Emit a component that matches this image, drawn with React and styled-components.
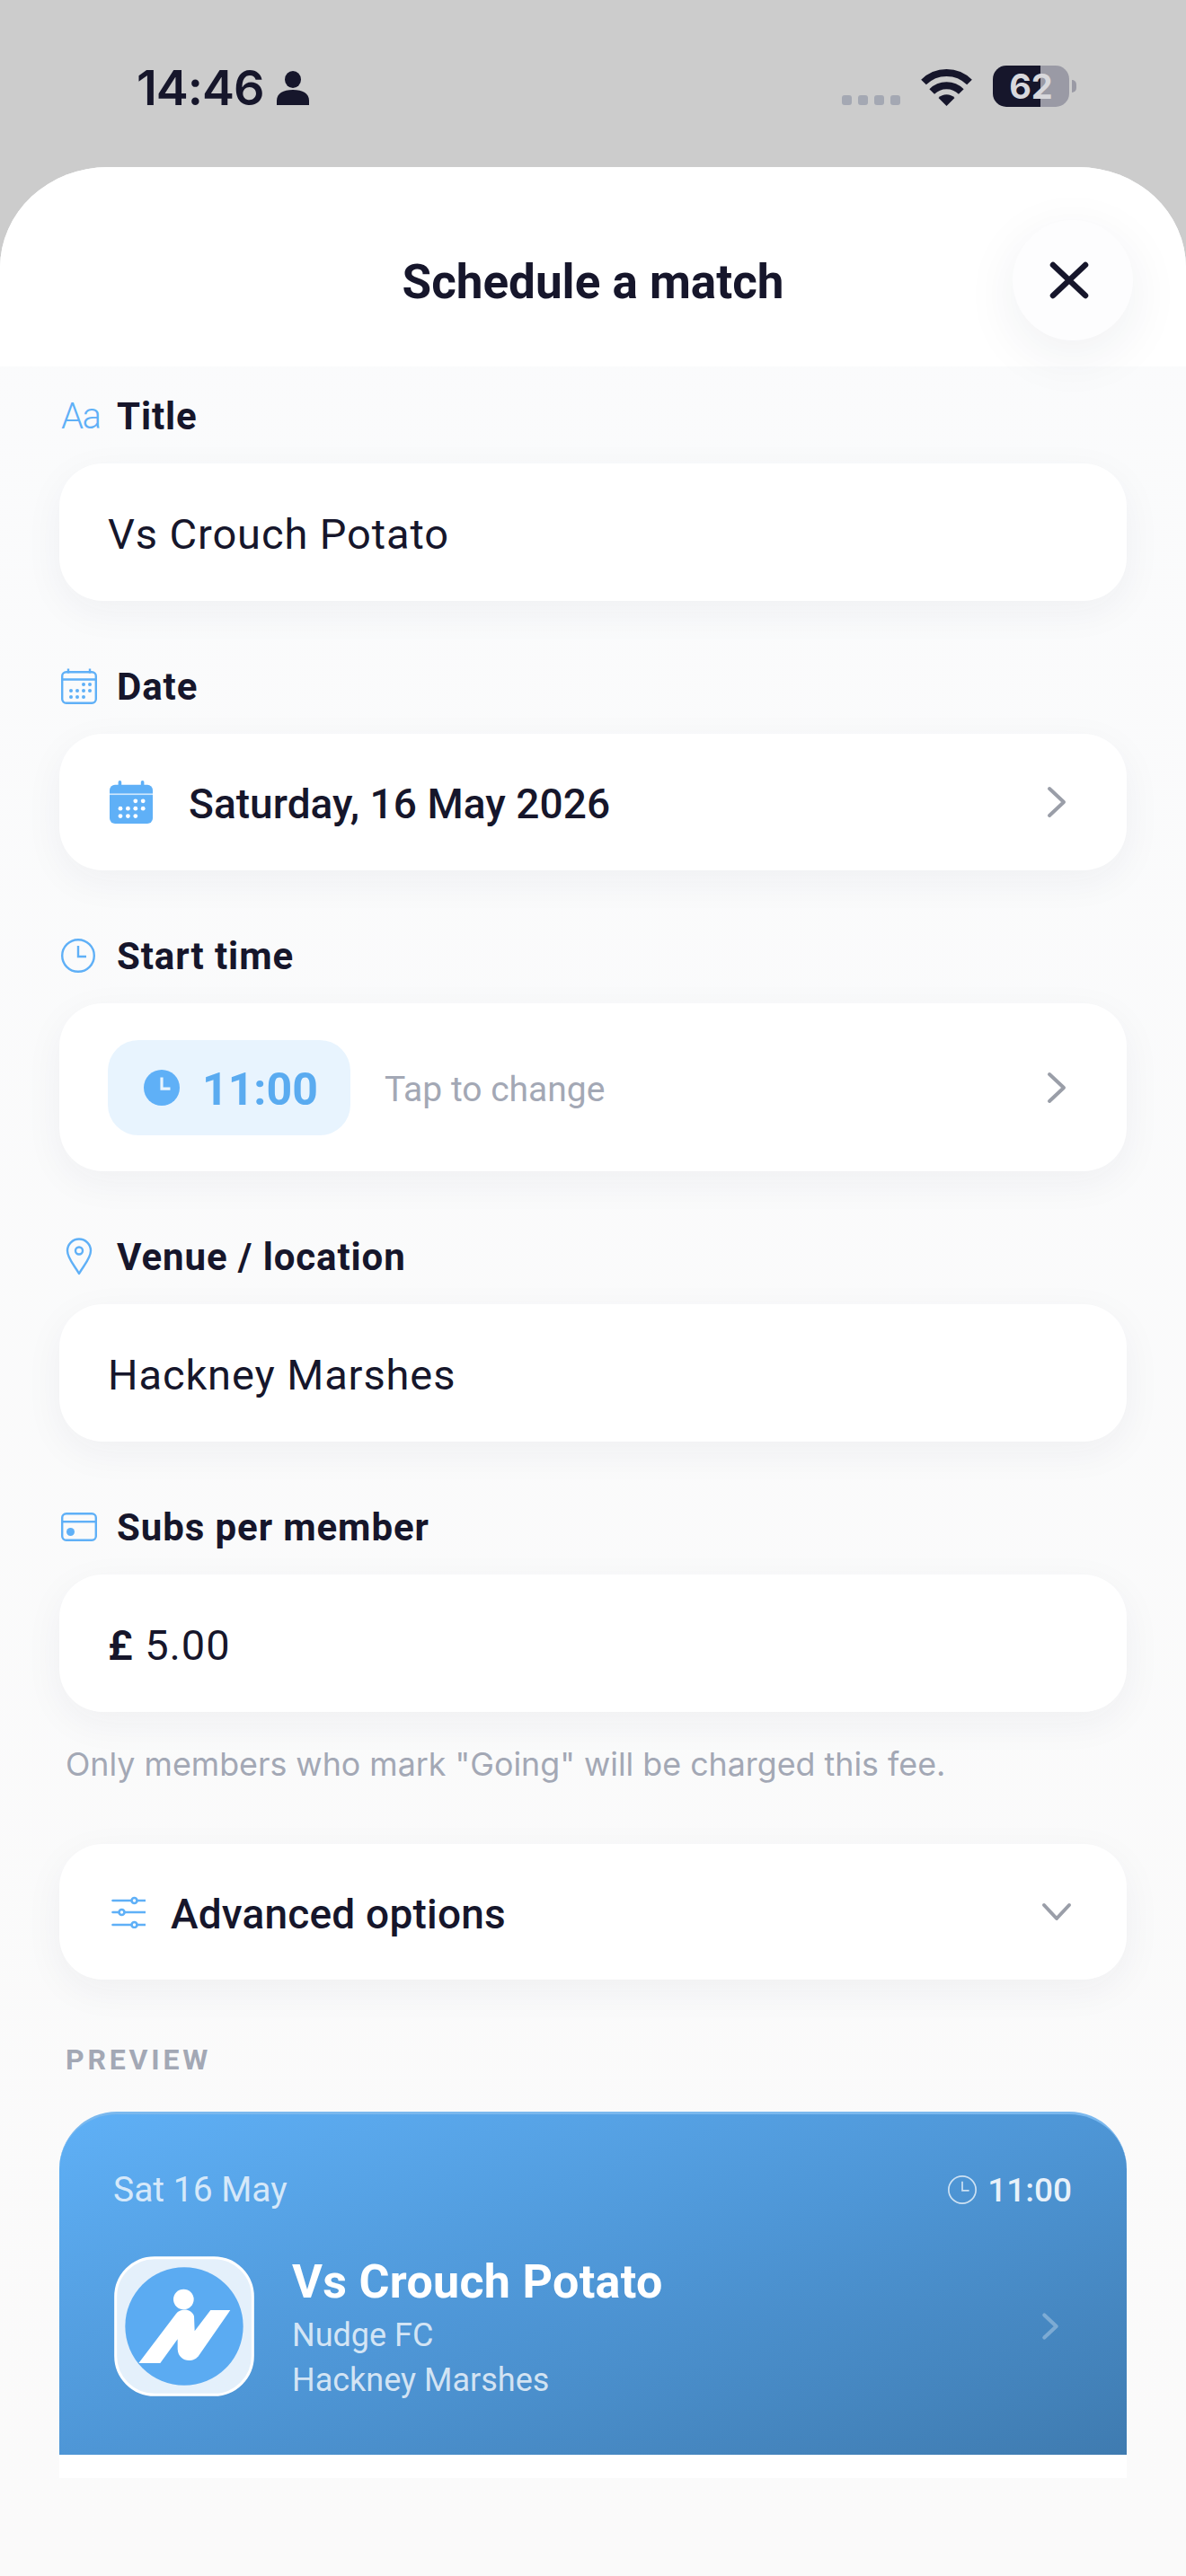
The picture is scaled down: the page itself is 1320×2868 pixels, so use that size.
import React from 'react';
import styled, { createGlobalStyle } from 'styled-components';

const Global = createGlobalStyle`
  html, body { margin: 0; padding: 0; background: #cccccc; }
  body { font-family: Roboto, "Noto Sans", sans-serif; color: #16162b; }
  * { box-sizing: border-box; }
`;

const Page = styled.div`
  width: 1320px;
  height: 2868px;
  overflow: hidden;
  background: #cccccc;
  display: flex;
  flex-direction: column;
`;

const StatusBar = styled.div`
  height: 186px;
  flex: none;
  display: flex;
  align-items: flex-start;
  justify-content: space-between;
  padding: 73px 122px 0 152px;
`;

const StatusLeft = styled.div`
  display: flex;
  align-items: center;
  gap: 14px;
  height: 50px;
`;

const Clock = styled.span`
  font-family: Inter, sans-serif;
  font-size: 54px;
  font-weight: 600;
  letter-spacing: -1px;
  line-height: 50px;
`;

const StatusRight = styled.div`
  display: flex;
  align-items: flex-start;
`;

const Dots = styled.div`
  display: flex;
  gap: 7px;
  margin: 33px 23px 0 0;
`;

const Dot = styled.i`
  width: 11px;
  height: 11px;
  border-radius: 3px;
  background: #a4a8b3;
`;

const Battery = styled.div`
  position: relative;
  width: 85px;
  height: 46px;
  margin-left: 23px;
  border-radius: 15px;
  overflow: hidden;
  background: linear-gradient(90deg, #16162b 62%, #9a9aa5 62%);
  color: #d8d8dc;
  font-family: Inter, sans-serif;
  font-size: 38px;
  font-weight: 700;
  line-height: 46px;
  text-align: center;
`;

const BatteryNub = styled.i`
  width: 5px;
  height: 14px;
  margin: 16px 0 0 3px;
  border-radius: 0 5px 5px 0;
  background: #9a9aa5;
`;

const Sheet = styled.div`
  flex: 1;
  display: flex;
  flex-direction: column;
  background: linear-gradient(180deg, #fafbfc 0%, #fafafa 100%);
  border-radius: 120px 120px 0 0 / 112px 112px 0 0;
  overflow: hidden;
`;

const Header = styled.header`
  position: relative;
  height: 222px;
  flex: none;
  background: #ffffff;
  display: flex;
  align-items: center;
  justify-content: center;
  padding-top: 34px;
  font-size: 53px;
  font-weight: 700;
`;

const CloseButton = styled.button`
  position: absolute;
  top: 59px;
  right: 59px;
  width: 134px;
  height: 134px;
  border: 0;
  border-radius: 50%;
  background: #fdfdfe;
  box-shadow: 0 16px 60px rgba(30, 40, 70, 0.07);
  display: flex;
  align-items: center;
  justify-content: center;
  padding: 0 8px 0 0;
`;

const Body = styled.main`
  padding: 24px 66px 0;
  display: flex;
  flex-direction: column;
`;

const Section = styled.section`
  margin-bottom: 64px;
`;

const Label = styled.div`
  height: 60px;
  margin-bottom: 24px;
  padding-top: 2px;
  display: flex;
  align-items: center;
  font-size: 42px;
  font-weight: 700;
  letter-spacing: 0.9px;
`;

const LabelIcon = styled.span`
  width: 64px;
  flex: none;
  display: flex;
  justify-content: flex-start;
  padding-left: 2px;
`;

const AaText = styled.span`
  font-family: Roboto, sans-serif;
  font-size: 40px;
  font-weight: 300;
  color: #5fb0f7;
  letter-spacing: -1.5px;
`;

const Card = styled.div`
  height: ${p => p.$h || 153}px;
  background: #ffffff;
  border-radius: 48px;
  box-shadow: 0 12px 44px rgba(30, 40, 70, 0.05);
  display: flex;
  align-items: center;
  padding: 0 66px 0 ${p => p.$left || 54}px;
`;

const Value = styled.span`
  font-size: ${p => p.$size || 47}px;
  font-weight: ${p => p.$weight || 400};
  letter-spacing: ${p => p.$track || 0.9}px;
  margin-left: ${p => p.$gap || 0}px;
  padding-top: 4px;
`;

const PoundSign = styled.span`
  font-weight: 600;
`;

const Chevron = styled.span`
  margin-left: auto;
  display: flex;
  margin-right: ${p => p.$right || 0}px;
`;

const TimePill = styled.div`
  width: 270px;
  height: 106px;
  border-radius: 34px;
  background: #e8f4fe;
  display: flex;
  align-items: center;
  gap: 25px;
  padding-left: 40px;
  color: #5aabf0;
  font-size: 50px;
  font-weight: 700;
`;

const PillText = styled.span`
  padding-top: 4px;
`;

const Hint = styled.span`
  margin-left: 38px;
  padding-top: 4px;
  font-size: 39px;
  color: #a3a8b5;
`;

const Note = styled.p`
  margin: -30px 0 0;
  height: 48px;
  padding-left: 7px;
  font-family: Inter, sans-serif;
  font-size: 35.8px;
  line-height: 48px;
  color: #a3a8b5;
`;

const Advanced = styled(Card)`
  margin-top: 65px;
`;

const PreviewTitle = styled.div`
  margin: 71px 0 40px 7px;
  height: 36px;
  font-size: 32px;
  line-height: 36px;
  font-weight: 700;
  letter-spacing: 3.8px;
  color: #a3a8b5;
`;

const PreviewWrap = styled.div`
  background: #ffffff;
  border-radius: 64px 64px 0 0;
  padding-bottom: 26px;
`;

const PreviewCard = styled.div`
  height: 382px;
  padding: 60px 61px 0 60px;
  border-radius: 64px 64px 0 0;
  border-top: 3px solid #7ab8ee;
  background: linear-gradient(162deg, #5fb0f6 0%, #4e96d6 50%, #3f7bb0 100%);
  color: #ffffff;
`;

const PreviewTop = styled.div`
  height: 48px;
  display: flex;
  align-items: center;
  justify-content: space-between;
  font-size: 39px;
  color: rgba(255, 255, 255, 0.76);
`;

const PreviewTime = styled.span`
  display: flex;
  align-items: center;
  gap: 12px;
  font-size: 37px;
  font-weight: 500;
  color: rgba(255, 255, 255, 0.88);
`;

const PreviewMain = styled.div`
  margin-top: 43px;
  display: flex;
  align-items: center;
  padding-right: 14px;
`;

const Logo = styled.svg`
  width: 156px;
  height: 156px;
  flex: none;
  margin-left: 1px;
`;

const MatchInfo = styled.div`
  margin-left: 42px;
  padding-top: 7px;
  display: flex;
  flex-direction: column;
`;

const MatchTitle = styled.div`
  font-size: 52px;
  line-height: 58px;
  font-weight: 700;
  letter-spacing: 0.3px;
  margin-bottom: 5px;
`;

const MatchLine = styled.div`
  font-size: 36px;
  line-height: 50px;
  color: rgba(255, 255, 255, 0.76);
`;

const BLUE = '#5fb0f7';

const CalendarIcon = ({ solid, size = 40 }) => (
  <svg width={size} height={size} viewBox="0 0 40 40">
    {solid ? (
      <>
        <rect x="0" y="4" width="40" height="36" rx="5" fill={BLUE} />
        <rect x="8" y="0" width="3" height="6" rx="1.5" fill={BLUE} />
        <rect x="29" y="0" width="3" height="6" rx="1.5" fill={BLUE} />
        <rect x="0" y="12" width="40" height="1.4" fill="#fff" opacity="0.7" />
      </>
    ) : (
      <>
        <rect x="1.2" y="4.2" width="37.6" height="34.6" rx="4.5" fill="none" stroke={BLUE} strokeWidth="2.4" />
        <path d="M1 12.5h38M8 0.5v5M32 0.5v5" stroke={BLUE} strokeWidth="2.4" />
      </>
    )}
    {[[25, 18], [32, 18], [11, 25], [18, 25], [25, 25], [32, 25], [11, 32], [18, 32], [25, 32]].map(([x, y]) => (
      <circle key={x + '-' + y} cx={x - (solid ? 1 : 0)} cy={y + (solid ? 1 : 0)} r="2" fill={solid ? '#fff' : BLUE} />
    ))}
  </svg>
);

const ClockIcon = ({ solid, size = 38, color = BLUE, stroke = 2.4 }) => (
  <svg width={size} height={size} viewBox="0 0 38 38" fill="none">
    <circle cx="19" cy="19" r={solid ? 19 : 19 - stroke / 2} fill={solid ? color : 'none'} stroke={solid ? 'none' : color} strokeWidth={stroke} />
    <path d="M19 8v12h9" stroke={solid ? '#e8f4fe' : color} strokeWidth={solid ? 3 : stroke} fill="none" />
  </svg>
);

const PinIcon = () => (
  <svg width="30" height="42" viewBox="0 0 30 42" fill="none" stroke={BLUE} strokeWidth="2.4">
    <path d="M15 40 C10 31 2 23 2 14.5 A13 13 0 0 1 28 14.5 C28 23 20 31 15 40Z" strokeLinejoin="round" />
    <circle cx="15" cy="14.5" r="4" />
  </svg>
);

const PinSlot = styled.span`
  margin-left: 5px;
  display: flex;
`;

const CardIcon = () => (
  <svg width="40" height="32" viewBox="0 0 40 32" fill="none">
    <rect x="1.2" y="1.2" width="37.6" height="29.6" rx="4.5" stroke={BLUE} strokeWidth="2.4" />
    <rect x="1" y="9" width="38" height="2.4" fill={BLUE} />
    <circle cx="10.5" cy="21.5" r="4.5" fill={BLUE} />
  </svg>
);

const SlidersIcon = () => (
  <svg width="38" height="36" viewBox="0 0 38 36" fill="none" stroke={BLUE} strokeWidth="2.6" strokeLinecap="round">
    <path d="M1.5 5h36M1.5 18h36M1.5 32h36" />
    <circle cx="25.5" cy="5" r="3" fill="#fff" />
    <circle cx="11.5" cy="18" r="3" fill="#fff" />
    <circle cx="25.5" cy="32" r="3" fill="#fff" />
  </svg>
);

const ChevronRight = ({ color = '#9a9ea8', width = 24, height = 36, stroke = 4 }) => (
  <svg width={width} height={height} viewBox="0 0 24 36" fill="none" stroke={color} strokeWidth={stroke} strokeLinecap="round" strokeLinejoin="round">
    <path d="M4 3l16 15L4 33" />
  </svg>
);

const ChevronDown = () => (
  <svg width="34" height="22" viewBox="0 0 34 22" fill="none" stroke="#9a9ea8" strokeWidth="4" strokeLinecap="round" strokeLinejoin="round">
    <path d="M3 3l14 15L31 3" />
  </svg>
);

export default function App() {
  return (
    <Page>
      <Global />
      <StatusBar>
        <StatusLeft>
          <Clock>14:46</Clock>
          <svg width="36" height="38" viewBox="0 0 36 38" fill="#16162b">
            <ellipse cx="18" cy="9.5" rx="9" ry="9.5" />
            <path d="M0 38v-5c0-8 7-12 18-12s18 4 18 12v5z" />
          </svg>
        </StatusLeft>
        <StatusRight>
          <Dots><Dot /><Dot /><Dot /><Dot /></Dots>
          <svg width="57" height="44" viewBox="0 0 57 44" fill="none" stroke="#16162b" strokeWidth="8" style={{ marginTop: 2 }}>
            <path d="M3 16.5a36 36 0 0 1 51 0" />
            <path d="M12.2 27a23 23 0 0 1 32.6 0" />
            <path d="M28.5 43L19.5 34a12.7 12.7 0 0 1 18 0z" fill="#16162b" stroke="none" />
          </svg>
          <Battery>62</Battery>
          <BatteryNub />
        </StatusRight>
      </StatusBar>
      <Sheet>
        <Header>
          Schedule a match
          <CloseButton aria-label="Close">
            <svg width="44" height="42" viewBox="0 0 44 42" fill="none" stroke="#16162b" strokeWidth="6.5" strokeLinecap="round">
              <path d="M4 4l36 34M40 4L4 38" />
            </svg>
          </CloseButton>
        </Header>
        <Body>
          <Section>
            <Label><LabelIcon><AaText>Aa</AaText></LabelIcon>Title</Label>
            <Card><Value>Vs Crouch Potato</Value></Card>
          </Section>
          <Section>
            <Label><LabelIcon><CalendarIcon /></LabelIcon>Date</Label>
            <Card $h={152} $left={56}>
              <CalendarIcon solid size={48} />
              <Value $size={46} $weight={500} $track={0.05} $gap={40}>Saturday, 16 May 2026</Value>
              <Chevron><ChevronRight /></Chevron>
            </Card>
          </Section>
          <Section>
            <Label><LabelIcon><ClockIcon /></LabelIcon>Start time</Label>
            <Card $h={187}>
              <TimePill><ClockIcon solid size={40} /><PillText>11:00</PillText></TimePill>
              <Hint>Tap to change</Hint>
              <Chevron><ChevronRight /></Chevron>
            </Card>
          </Section>
          <Section>
            <Label><LabelIcon><PinSlot><PinIcon /></PinSlot></LabelIcon>Venue / location</Label>
            <Card><Value>Hackney Marshes</Value></Card>
          </Section>
          <Section>
            <Label><LabelIcon><CardIcon /></LabelIcon>Subs per member</Label>
            <Card><Value><PoundSign>£</PoundSign> 5.00</Value></Card>
          </Section>
          <Note>Only members who mark "Going" will be charged this fee.</Note>
          <Advanced $h={151} $left={58}>
            <SlidersIcon />
            <Value $size={46} $weight={500} $track={0.2} $gap={28}>Advanced options</Value>
            <Chevron $right={-5}><ChevronDown /></Chevron>
          </Advanced>
          <PreviewTitle>PREVIEW</PreviewTitle>
          <PreviewWrap>
            <PreviewCard>
              <PreviewTop>
                <span>Sat 16 May</span>
                <PreviewTime>
                  <ClockIcon size={32} color="rgba(255,255,255,0.72)" stroke={2} />
                  11:00
                </PreviewTime>
              </PreviewTop>
              <PreviewMain>
                <Logo viewBox="78 90 468 468">
                  <rect x="83" y="95" width="458" height="458" rx="130" fill="#e4f0fb" stroke="#fff" strokeWidth="9" />
                  <circle cx="312" cy="324" r="197" fill="#5babf2" />
                  <circle cx="310" cy="234" r="34" fill="#fff" />
                  <path d="M160 447L285 282C298 264 335 262 345 290L347 340L400 270H466L362 420C345 448 292 445 290 400V367L232 447Z" fill="#fff" />
                </Logo>
                <MatchInfo>
                  <MatchTitle>Vs Crouch Potato</MatchTitle>
                  <MatchLine>Nudge FC</MatchLine>
                  <MatchLine>Hackney Marshes</MatchLine>
                </MatchInfo>
                <Chevron><ChevronRight color="rgba(255,255,255,0.3)" width={20} stroke={5} /></Chevron>
              </PreviewMain>
            </PreviewCard>
          </PreviewWrap>
        </Body>
      </Sheet>
    </Page>
  );
}
